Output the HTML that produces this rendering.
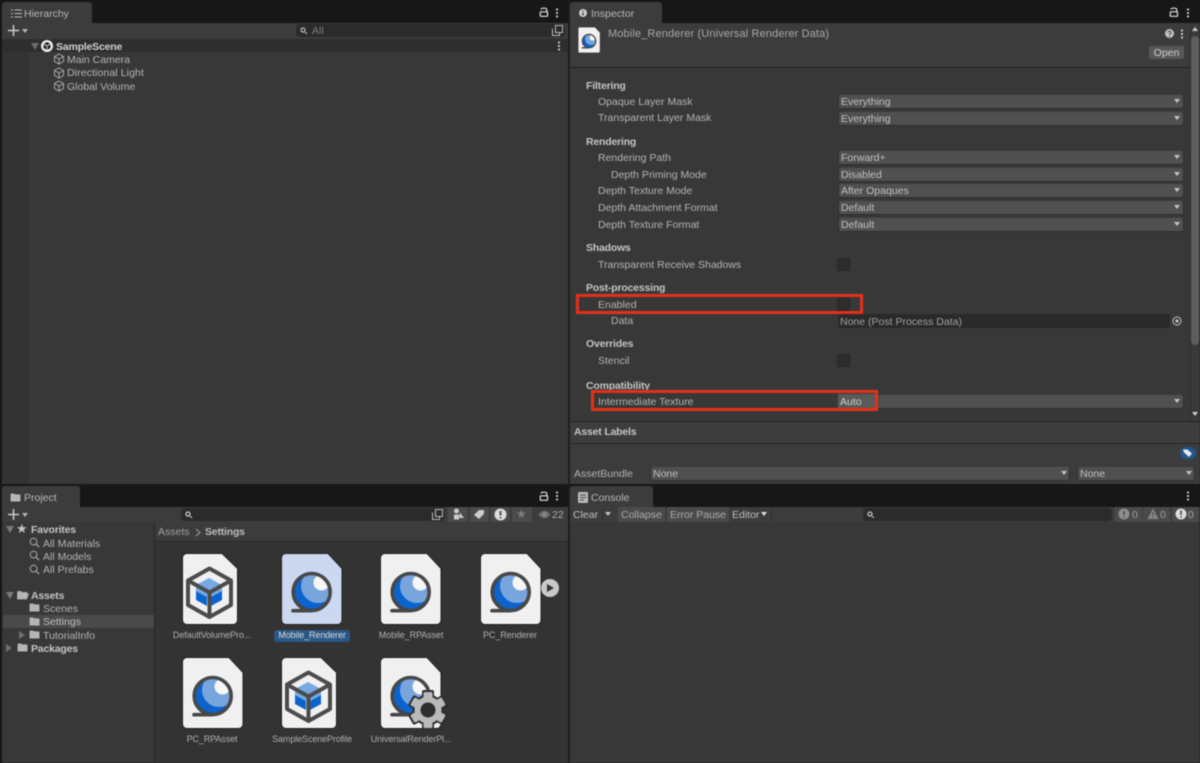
<!DOCTYPE html>
<html lang="en"><head><meta charset="utf-8"><title>Unity Editor</title>
<style>
html,body{margin:0;padding:0;background:#171717}
#r{position:relative;width:1200px;height:763px;overflow:hidden;background:#171717;font:10.5px/14px "Liberation Sans",sans-serif;color:#b4b4b4;filter:blur(.4px)}
#r div,#r svg{position:absolute}
.t{white-space:nowrap;height:14px;margin-top:1px}
.b{font-weight:bold;color:#c4c4c4;letter-spacing:-.2px}
.dd{left:838px;width:344px;height:13px;background:#505050;border:1px solid #2e2e2e;border-top-color:#3c3c3c;border-radius:3px;margin-top:-1px}
.dd span{position:absolute;left:2px;top:1px;line-height:13px;color:#c0c0c0}
.ar{width:0;height:0;border-left:3.500px solid transparent;border-right:3.500px solid transparent;border-top:4.500px solid #c4c4c4}
.cb{left:837px;width:11px;height:11px;background:#2d2d2d;border:1px solid #262626;border-radius:2px}
.red{border:3px solid #e72f16;box-sizing:border-box;box-shadow:0 0 0 1px rgba(30,80,80,.25)}
.lb{font-size:9px;line-height:12px;text-align:center;color:#b0b0b0;white-space:nowrap;letter-spacing:-.1px}
.btn{background:#4a4a4a;height:15px;top:507px}
</style></head>
<body><div id="r">
<svg width="0" height="0" style="left:0;top:0">
<defs>
<clipPath id="ball"><circle cx="30.700" cy="39" r="18.500"/></clipPath>
<g id="page55"><path d="M5 .5H40L55.500 15.500V67a4.500 4.500 0 0 1-4.500 4.500H5A4.500 4.500 0 0 1 .5 67V5A4.500 4.500 0 0 1 5 .5Z" fill="#f0f0f0" stroke="#222"/></g>
<g id="page61"><path d="M5 .5H47L61 15.500V67a4.500 4.500 0 0 1-4.500 4.500H5A4.500 4.500 0 0 1 .5 67V5A4.500 4.500 0 0 1 5 .5Z" fill="#f0f0f0" stroke="#222"/></g>
<g id="sphere">
<g clip-path="url(#ball)"><rect x="10" y="18" width="42" height="42" fill="#0b63ce"/><circle cx="37" cy="33" r="17" fill="#78a6dc"/><circle cx="40.500" cy="29.500" r="8" fill="#f6f6f6"/></g>
<circle cx="30.700" cy="39" r="18.500" fill="none" stroke="#474747" stroke-width="3.600"/>
<path d="M12 57.700H30" stroke="#474747" stroke-width="3.600" stroke-linecap="round" fill="none"/></g>
<g id="cube">
<path d="M14 32L27 25 40 32V38L27 45 14 38Z" fill="#76a8e2"/>
<path d="M14 38L25 44V53L14 47ZM40 38L29 44V53L40 47Z" fill="#0b63ce"/>
<path d="M27.500 15.500L49 27.500V52L27.500 64 6 52V27.500ZM6 27.500L27.500 39.500 49 27.500M27.500 39.500V64" fill="none" stroke="#4b4b4b" stroke-width="4" stroke-linejoin="round"/></g>
<symbol id="cubes" viewBox="0 0 12 12"><path d="M6 1L10.500 3.500V8.500L6 11 1.500 8.500V3.500ZM1.500 3.500L6 6 10.500 3.500M6 6V11" fill="none" stroke="#a8a8a8" stroke-width="1"/></symbol>
<symbol id="lock" viewBox="0 0 10 10"><path d="M2 2.500C2.500 .6 7.800 .4 7.800 3V4.500" fill="none" stroke="#e2e2e2" stroke-width="1.200"/><rect x="1.300" y="4.800" width="7.200" height="4.500" rx=".5" fill="none" stroke="#e2e2e2" stroke-width="1.200"/></symbol>
<symbol id="dots" viewBox="0 0 4 10"><circle cx="2" cy="1.500" r="1.100" fill="#ccc"/><circle cx="2" cy="5" r="1.100" fill="#ccc"/><circle cx="2" cy="8.500" r="1.100" fill="#ccc"/></symbol>
<symbol id="mag" viewBox="0 0 12 12"><circle cx="5" cy="5" r="3.700" fill="none" stroke="#a8a8a8" stroke-width="1.100"/><path d="M7.700 7.700L11 11" stroke="#a8a8a8" stroke-width="1.400"/></symbol>
<symbol id="folder" viewBox="0 0 12 10"><path d="M.5 1.500A1 1 0 0 1 1.500 .5H4.500L5.500 1.500H10.500A1 1 0 0 1 11.500 2.500V9.500H.5Z" fill="#b5b5b5"/></symbol>
</defs></svg>

<!-- Hierarchy -->
<div style="left:2px;top:2px;width:90px;height:21px;background:#3c3c3c;border-radius:3px 3px 0 0"></div>
<svg style="left:11px;top:9px" width="11" height="9"><path d="M0 1H2M3.500 1H11M0 4.500H2M3.500 4.500H11M0 8H2M3.500 8H11" stroke="#bbb" stroke-width="1"/></svg>
<div class="t" style="left:24px;top:6px;color:#b8b8b8">Hierarchy</div>
<svg style="left:539px;top:7px" width="10" height="10"><use href="#lock"/></svg>
<svg style="left:555px;top:8px" width="4" height="10"><use href="#dots"/></svg>
<div style="left:2px;top:23px;width:566px;height:16px;background:#3c3c3c"></div>
<svg style="left:8px;top:25px" width="11" height="11"><path d="M5.500 0V11M0 5.500H11" stroke="#ccc" stroke-width="1.500"/></svg>
<div class="ar" style="left:22px;top:29px;border-top-color:#b5b5b5"></div>
<div style="left:296px;top:24px;width:269px;height:13px;background:#2b2b2b;border-radius:4px"></div>
<svg style="left:300px;top:27px" width="9" height="8"><circle cx="3" cy="3" r="2" fill="none" stroke="#bbb" stroke-width="1.200"/><path d="M5 5L7 7" stroke="#bbb"/></svg>
<div class="t" style="left:312px;top:23px;color:#7c7c7c">All</div>
<svg style="left:552px;top:25px" width="11" height="11"><path d="M3.500 .5H10.500V7.500H3.500ZM.5 3.500V10.500H7.500V7.500" fill="none" stroke="#bbb"/></svg>
<div style="left:2px;top:39px;width:566px;height:13px;background:#2e2e2e"></div>
<div style="left:2px;top:52px;width:566px;height:432px;background:#383838"></div>
<div style="left:2px;top:52px;width:27px;height:432px;background:#333"></div>
<div style="left:31px;top:43px;width:0;height:0;border-left:4px solid transparent;border-right:4px solid transparent;border-top:7px solid #6b6b6b"></div>
<svg style="left:41px;top:40px" width="12" height="12"><circle cx="6" cy="6" r="6" fill="#eee"/><path d="M6 2L9.500 4V8L6 10 2.500 8V4Z" fill="#222"/><path d="M2.500 4L6 6 9.500 4M6 6V10" stroke="#eee" stroke-width=".8" fill="none"/></svg>
<div class="t b" style="left:56px;top:39px;color:#d0d0d0">SampleScene</div>
<svg style="left:557px;top:41px" width="4" height="10"><use href="#dots"/></svg>
<svg style="left:53px;top:53px" width="12" height="12"><use href="#cubes"/></svg>
<div class="t" style="left:67px;top:52px">Main Camera</div>
<svg style="left:53px;top:67px" width="12" height="12"><use href="#cubes"/></svg>
<div class="t" style="left:67px;top:65px;letter-spacing:.1px">Directional Light</div>
<svg style="left:53px;top:80px" width="12" height="12"><use href="#cubes"/></svg>
<div class="t" style="left:67px;top:79px">Global Volume</div>

<!-- Inspector -->
<div style="left:570px;top:2px;width:92px;height:21px;background:#3c3c3c;border-radius:3px 3px 0 0"></div>
<svg style="left:579px;top:9px" width="8" height="8"><circle cx="4" cy="4" r="4" fill="#ccc"/><path d="M4 3.500V6.500M4 1.500V2.500" stroke="#333" stroke-width="1.200"/></svg>
<div class="t" style="left:591px;top:6px;color:#b8b8b8">Inspector</div>
<svg style="left:1169px;top:7px" width="10" height="10"><use href="#lock"/></svg>
<svg style="left:1186px;top:8px" width="4" height="10"><use href="#dots"/></svg>
<div style="left:570px;top:23px;width:630px;height:44px;background:#3c3c3c"></div>
<div style="left:570px;top:67px;width:620px;height:1px;background:#222"></div>
<svg style="left:578px;top:27px" width="22" height="26" viewBox="0 0 61 72" preserveAspectRatio="none"><use href="#page61"/><use href="#sphere"/></svg>
<div class="t" style="left:608px;top:26px;font-size:11px;letter-spacing:.13px;color:#a8a8a8">Mobile_Renderer (Universal Renderer Data)</div>
<svg style="left:1165px;top:29px" width="9" height="9"><circle cx="4.500" cy="4.500" r="4.500" fill="#c4c4c4"/><path d="M3 3.500A1.500 1.500 0 1 1 4.500 5.200V6M4.500 7V8" stroke="#444" fill="none"/></svg>
<svg style="left:1180px;top:29px" width="4" height="10"><use href="#dots"/></svg>
<div class="t" style="left:1149px;top:45px;width:35px;height:13px;background:#585858;border-radius:2px;text-align:center;line-height:14px;color:#ccc">Open</div>
<div style="left:570px;top:68px;width:620px;height:353px;background:#383838"></div>
<div style="left:1190px;top:23px;width:10px;height:398px;background:#3a3a3a;border-left:1px solid #2e2e2e;box-sizing:border-box"></div>
<div style="left:1191px;top:36px;width:8px;height:309px;background:#5e5e5e;border-radius:4px"></div>
<div style="left:1192px;top:27px;width:0;height:0;border-left:3px solid transparent;border-right:3px solid transparent;border-bottom:4px solid #ccc"></div>
<div style="left:1192px;top:412px;width:0;height:0;border-left:3px solid transparent;border-right:3px solid transparent;border-top:4px solid #ccc"></div>

<div class="t b" style="left:586px;top:78px">Filtering</div>
<div class="t" style="left:598px;top:94px">Opaque Layer Mask</div>
<div class="dd" style="top:95px"><span>Everything</span></div><div class="ar" style="left:1174px;top:99px"></div>
<div class="t" style="left:598px;top:110px">Transparent Layer Mask</div>
<div class="dd" style="top:112px"><span>Everything</span></div><div class="ar" style="left:1174px;top:116px"></div>

<div class="t b" style="left:586px;top:134px">Rendering</div>
<div class="t" style="left:598px;top:150px">Rendering Path</div>
<div class="dd" style="top:151px"><span>Forward+</span></div><div class="ar" style="left:1174px;top:155px"></div>
<div class="t" style="left:611px;top:167px">Depth Priming Mode</div>
<div class="dd" style="top:168px"><span>Disabled</span></div><div class="ar" style="left:1174px;top:172px"></div>
<div class="t" style="left:598px;top:183px">Depth Texture Mode</div>
<div class="dd" style="top:184px"><span>After Opaques</span></div><div class="ar" style="left:1174px;top:188px"></div>
<div class="t" style="left:598px;top:200px">Depth Attachment Format</div>
<div class="dd" style="top:201px"><span>Default</span></div><div class="ar" style="left:1174px;top:205px"></div>
<div class="t" style="left:598px;top:217px">Depth Texture Format</div>
<div class="dd" style="top:218px"><span>Default</span></div><div class="ar" style="left:1174px;top:222px"></div>

<div class="t b" style="left:586px;top:240px">Shadows</div>
<div class="t" style="left:598px;top:257px">Transparent Receive Shadows</div>
<div class="cb" style="top:258px"></div>

<div class="t b" style="left:586px;top:280px">Post-processing</div>
<div class="t" style="left:598px;top:297px">Enabled</div>
<div class="cb" style="top:298px"></div>
<div class="red" style="left:576px;top:294px;width:287px;height:20px"></div>
<div class="t" style="left:611px;top:313px">Data</div>
<div style="left:838px;top:314px;width:346px;height:14px;background:#2a2a2a;border-radius:3px"></div>
<div class="t" style="left:840px;top:314px;color:#a0a0a0">None (Post Process Data)</div>
<div style="left:1170px;top:314px;width:14px;height:14px;background:#383838;border-radius:0 3px 3px 0"></div>
<svg style="left:1172px;top:316px" width="10" height="10"><circle cx="5" cy="5" r="4" fill="none" stroke="#c4c4c4"/><circle cx="5" cy="5" r="1.600" fill="#c4c4c4"/></svg>

<div class="t b" style="left:586px;top:336px">Overrides</div>
<div class="t" style="left:598px;top:353px">Stencil</div>
<div class="cb" style="top:354px"></div>

<div class="t b" style="left:586px;top:378px">Compatibility</div>
<div class="t" style="left:598px;top:394px">Intermediate Texture</div>
<div class="dd" style="top:395px"><span>&nbsp;</span></div><div class="ar" style="left:1174px;top:399px"></div>
<div style="left:838px;top:394px;width:37px;height:14px;background:#5a5a5a"></div>
<div class="t" style="left:840px;top:394px;color:#d0d0d0">Auto</div>
<div class="red" style="left:591px;top:390px;width:287px;height:21px"></div>

<div style="left:570px;top:421px;width:630px;height:1px;background:#222"></div>
<div style="left:570px;top:422px;width:630px;height:21px;background:#3d3d3d"></div>
<div style="left:570px;top:443px;width:630px;height:1px;background:#262626"></div>
<div style="left:570px;top:444px;width:630px;height:40px;background:#3c3c3c"></div>
<div class="t b" style="left:574px;top:424px">Asset Labels</div>
<div style="left:1180px;top:447px;width:16px;height:12px;background:#22568f;border-radius:6px"></div>
<svg style="left:1182px;top:448px" width="11" height="10"><path d="M1 1.500H5.500L10 5.500 7 9 2 4.500Z" fill="#e8e8e8"/></svg>
<div class="t" style="left:574px;top:466px">AssetBundle</div>
<div class="dd" style="left:650px;top:467px;width:418px"><span>None</span></div><div class="ar" style="left:1061px;top:471px"></div>
<div class="dd" style="left:1077px;top:467px;width:116px"><span>None</span></div><div class="ar" style="left:1186px;top:471px"></div>

<!-- Project -->
<div style="left:2px;top:486px;width:78px;height:21px;background:#3c3c3c;border-radius:3px 3px 0 0"></div>
<svg style="left:10px;top:493px" width="11" height="9"><use href="#folder"/></svg>
<div class="t" style="left:24px;top:490px;color:#b8b8b8">Project</div>
<svg style="left:539px;top:491px" width="10" height="10"><use href="#lock"/></svg>
<svg style="left:555px;top:491px" width="4" height="10"><use href="#dots"/></svg>
<div style="left:2px;top:507px;width:566px;height:15px;background:#3c3c3c"></div>
<svg style="left:8px;top:509px" width="11" height="11"><path d="M5.500 0V11M0 5.500H11" stroke="#ccc" stroke-width="1.500"/></svg>
<div class="ar" style="left:22px;top:513px;border-top-color:#b5b5b5"></div>
<div style="left:181px;top:508px;width:264px;height:13px;background:#2b2b2b;border-radius:4px"></div>
<svg style="left:185px;top:511px" width="8" height="8"><circle cx="3" cy="3" r="2" fill="none" stroke="#ccc" stroke-width="1.200"/><path d="M5 5L7 7" stroke="#ccc"/></svg>
<svg style="left:432px;top:509px" width="11" height="11"><path d="M3.500 .5H10.500V7.500H3.500ZM.5 3.500V10.500H7.500V7.500" fill="none" stroke="#bbb"/></svg>
<div style="left:448px;top:507px;width:20px;height:15px;background:#4a4a4a"></div>
<svg style="left:452px;top:508px" width="12" height="12"><circle cx="4.500" cy="3" r="2.500" fill="#ccc"/><rect x="2" y="6.500" width="5" height="5" fill="#ccc"/><path d="M8 4.500L12 10H7Z" fill="#ccc"/></svg>
<div style="left:470px;top:507px;width:19px;height:15px;background:#4a4a4a"></div>
<svg style="left:473px;top:509px" width="12" height="11"><path d="M1 6L6 1H11V5L6 10Z" fill="#ccc"/></svg>
<div style="left:491px;top:507px;width:19px;height:15px;background:#4a4a4a"></div>
<svg style="left:494px;top:508px" width="13" height="13"><circle cx="6.500" cy="6.500" r="6" fill="#ddd"/><path d="M6.500 3V7.500M6.500 9V10.500" stroke="#333" stroke-width="1.600"/></svg>
<div style="left:512px;top:507px;width:20px;height:15px;background:#4a4a4a"></div>
<div class="t" style="left:516px;top:506px;font-size:12px;color:#7f7f7f">★</div>
<svg style="left:538px;top:510px" width="13" height="9"><path d="M.5 4.500C4 -.5 9 -.5 12.500 4.500C9 9.500 4 9.500 .5 4.500Z" fill="#6d6d6d"/><circle cx="6.500" cy="4.500" r="2" fill="#8a8a8a"/></svg>
<div class="t" style="left:552px;top:507px;color:#adadad">22</div>

<div style="left:2px;top:522px;width:152px;height:241px;background:#383838"></div>
<div style="left:154px;top:522px;width:1px;height:241px;background:#252525"></div>
<div style="left:155px;top:522px;width:413px;height:241px;background:#333"></div>
<div style="left:155px;top:522px;width:413px;height:19px;background:#3c3c3c"></div>
<div style="left:155px;top:541px;width:413px;height:1px;background:#2a2a2a"></div>
<div class="t" style="left:158px;top:524px;color:#a0a0a0">Assets</div>
<svg style="left:195px;top:528px" width="6" height="9"><path d="M1 1L5 4.500 1 8" fill="none" stroke="#8f8f8f" stroke-width="1.200"/></svg>
<div class="t b" style="left:205px;top:524px;color:#bcbcbc">Settings</div>

<div style="left:6px;top:526px;width:0;height:0;border-left:4px solid transparent;border-right:4px solid transparent;border-top:7px solid #7a7a7a"></div>
<div class="t" style="left:16px;top:521px;font-size:13px;color:#c4c4c4">★</div>
<div class="t b" style="left:31px;top:522px">Favorites</div>
<svg style="left:29px;top:537px" width="11" height="11"><use href="#mag"/></svg>
<div class="t" style="left:43px;top:536px">All Materials</div>
<svg style="left:29px;top:550px" width="11" height="11"><use href="#mag"/></svg>
<div class="t" style="left:43px;top:549px">All Models</div>
<svg style="left:29px;top:564px" width="11" height="11"><use href="#mag"/></svg>
<div class="t" style="left:43px;top:562px">All Prefabs</div>
<div style="left:6px;top:592px;width:0;height:0;border-left:4px solid transparent;border-right:4px solid transparent;border-top:7px solid #7a7a7a"></div>
<svg style="left:17px;top:590px" width="12" height="10"><path d="M.5 9V1.500H4L5 2.500H10V4H3L.5 9H9.500L11.500 4H3" fill="#b5b5b5" stroke="#b5b5b5" stroke-width=".7"/></svg>
<div class="t b" style="left:31px;top:588px">Assets</div>
<svg style="left:29px;top:603px" width="11" height="9"><use href="#folder"/></svg>
<div class="t" style="left:43px;top:601px">Scenes</div>
<div style="left:3px;top:615px;width:151px;height:13px;background:#4a4a4a"></div>
<svg style="left:29px;top:617px" width="11" height="9"><use href="#folder"/></svg>
<div class="t" style="left:43px;top:614px;color:#c0c0c0">Settings</div>
<div style="left:19px;top:631px;width:0;height:0;border-top:4px solid transparent;border-bottom:4px solid transparent;border-left:6px solid #6f6f6f"></div>
<svg style="left:29px;top:630px" width="11" height="9"><use href="#folder"/></svg>
<div class="t" style="left:43px;top:628px">TutorialInfo</div>
<div style="left:6px;top:644px;width:0;height:0;border-top:4px solid transparent;border-bottom:4px solid transparent;border-left:6px solid #6f6f6f"></div>
<svg style="left:17px;top:643px" width="11" height="9"><use href="#folder"/></svg>
<div class="t b" style="left:31px;top:641px">Packages</div>

<svg style="left:182px;top:553px" width="56" height="72"><use href="#page55"/><use href="#cube"/></svg>
<div class="lb" style="left:162px;width:100px;top:629px">DefaultVolumePro...</div>
<svg style="left:281px;top:553px" width="62" height="72"><path d="M5 .5H47L61 15.500V67a4.500 4.500 0 0 1-4.500 4.500H5A4.500 4.500 0 0 1 .5 67V5A4.500 4.500 0 0 1 5 .5Z" fill="#cbd8ef" stroke="#222"/><use href="#sphere"/></svg>
<div style="left:274px;top:630px;width:76px;height:12px;background:#2a5887;border-radius:3px"></div>
<div class="lb" style="left:262px;width:100px;top:629px;color:#d8d8d8">Mobile_Renderer</div>
<svg style="left:380px;top:553px" width="62" height="72"><use href="#page61"/><use href="#sphere"/></svg>
<div class="lb" style="left:361px;width:100px;top:629px">Mobile_RPAsset</div>
<svg style="left:480px;top:553px" width="62" height="72"><use href="#page61"/><use href="#sphere"/></svg>
<div class="lb" style="left:460px;width:100px;top:629px">PC_Renderer</div>
<svg style="left:541px;top:579px" width="18" height="18"><circle cx="9" cy="9" r="9" fill="#c8c8c8"/><path d="M6 5L13 9 6 13Z" fill="#333"/></svg>
<svg style="left:182px;top:657px" width="62" height="72"><use href="#page61"/><use href="#sphere"/></svg>
<div class="lb" style="left:162px;width:100px;top:733px">PC_RPAsset</div>
<svg style="left:281px;top:657px" width="56" height="72"><use href="#page55"/><use href="#cube"/></svg>
<div class="lb" style="left:262px;width:100px;top:733px">SampleSceneProfile</div>
<svg style="left:380px;top:657px" width="68" height="72"><use href="#page61"/><use href="#sphere"/>
<g transform="translate(48 53)"><g fill="#2e2e2e"><circle r="15.500"/><rect x="-6" y="-20" width="12" height="40" rx="2"/><rect x="-6" y="-20" width="12" height="40" rx="2" transform="rotate(60)"/><rect x="-6" y="-20" width="12" height="40" rx="2" transform="rotate(120)"/></g><g fill="#b9b9b9"><circle r="13.500"/><rect x="-4.500" y="-18" width="9" height="36" rx="1.500"/><rect x="-4.500" y="-18" width="9" height="36" rx="1.500" transform="rotate(60)"/><rect x="-4.500" y="-18" width="9" height="36" rx="1.500" transform="rotate(120)"/></g><circle r="7.500" fill="#2e2e2e"/></g></svg>
<div class="lb" style="left:361px;width:100px;top:733px">UniversalRenderPl...</div>

<!-- Console -->
<div style="left:570px;top:486px;width:83px;height:21px;background:#3c3c3c;border-radius:3px 3px 0 0"></div>
<svg style="left:578px;top:492px" width="10" height="11"><rect width="10" height="11" rx="1" fill="#bbb"/><path d="M2 3H8M2 5.500H8M2 8H6" stroke="#444"/></svg>
<div class="t" style="left:591px;top:490px;color:#b8b8b8">Console</div>
<svg style="left:1186px;top:491px" width="4" height="10"><use href="#dots"/></svg>
<div style="left:570px;top:507px;width:630px;height:15px;background:#3c3c3c"></div>
<div style="left:570px;top:522px;width:630px;height:241px;background:#383838"></div>
<div style="left:568px;top:485px;width:2px;height:278px;background:#1e1e1e"></div>
<div style="left:568px;top:0;width:2px;height:485px;background:#1e1e1e"></div>
<div class="t" style="left:573px;top:507px;color:#c0c0c0">Clear</div>
<div style="left:602px;top:509px;width:1px;height:11px;background:#2f2f2f"></div>
<div class="ar" style="left:605px;top:512px"></div>
<div class="btn" style="left:618px;width:47px"></div><div class="t" style="left:621px;top:507px;color:#acacac">Collapse</div>
<div class="btn" style="left:667px;width:62px"></div><div class="t" style="left:670px;top:507px;color:#acacac">Error Pause</div>
<div class="t" style="left:732px;top:507px;color:#c0c0c0">Editor</div>
<div class="ar" style="left:761px;top:512px;border-top-color:#ddd"></div>
<div style="left:771px;top:507px;width:1px;height:15px;background:#2f2f2f"></div>
<div style="left:863px;top:508px;width:249px;height:13px;background:#2b2b2b;border-radius:4px"></div>
<svg style="left:867px;top:511px" width="8" height="8"><circle cx="3" cy="3" r="2" fill="none" stroke="#ccc" stroke-width="1.200"/><path d="M5 5L7 7" stroke="#ccc"/></svg>
<div class="btn" style="left:1115px;width:27px"></div>
<svg style="left:1118px;top:508px" width="12" height="12"><circle cx="6" cy="6" r="5.500" fill="#8e8e8e"/><path d="M6 3V7M6 8.200V9.500" stroke="#4a4a4a" stroke-width="1.500"/></svg>
<div class="t" style="left:1132px;top:507px;color:#a0a0a0">0</div>
<div class="btn" style="left:1143px;width:27px"></div>
<svg style="left:1147px;top:508px" width="12" height="12"><path d="M6 .5L11.500 11H.5Z" fill="#858585"/><path d="M6 4V7.500M6 8.500V9.800" stroke="#4a4a4a" stroke-width="1.200"/></svg>
<div class="t" style="left:1160px;top:507px;color:#a0a0a0">0</div>
<div class="btn" style="left:1172px;width:27px"></div>
<svg style="left:1175px;top:508px" width="12" height="12"><circle cx="6" cy="6" r="5.500" fill="#dcdcdc"/><path d="M6 2.500V7M6 8.200V9.700" stroke="#444" stroke-width="1.500"/></svg>
<div class="t" style="left:1188px;top:507px;color:#a8a8a8">0</div>
</div></body></html>
